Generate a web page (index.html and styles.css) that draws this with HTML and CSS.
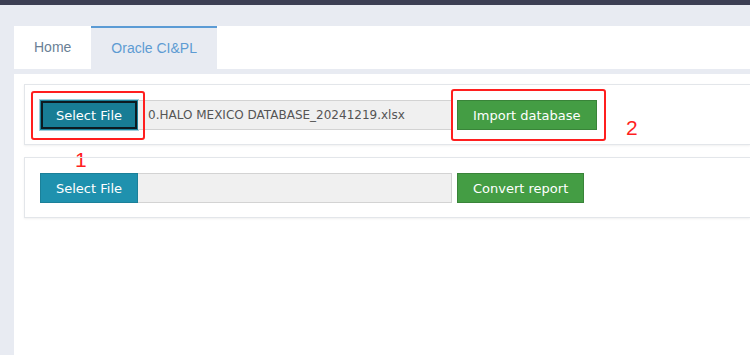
FILE: index.html
```html
<!DOCTYPE html>
<html lang="en">
<head>
<meta charset="UTF-8">
<meta name="viewport" content="width=device-width, initial-scale=1.0">
<title>Oracle CI&amp;PL</title>
<link rel="stylesheet" href="styles.css">
</head>
<body>

<div class="topbar"></div>

<div class="main">
  <div class="tabs">
    <div class="tab">Home</div>
    <div class="tab active">Oracle CI&amp;PL</div>
  </div>

  <div class="content">
    <div class="panel">
      <div class="row">
        <button class="btn-file focused">Select File</button>
        <div class="file-name">0.HALO MEXICO DATABASE_20241219.xlsx</div>
        <button class="btn-go">Import database</button>
      </div>
      <div class="mark box1"></div>
      <div class="mark box2"></div>
      <div class="num num1">1</div>
      <div class="num num2">2</div>
    </div>

    <div class="panel">
      <div class="row">
        <button class="btn-file">Select File</button>
        <div class="file-name"></div>
        <button class="btn-go">Convert report</button>
      </div>
    </div>
  </div>
</div>

</body>
</html>
```

FILE: styles.css
```css
body {
  margin: 0;
  background: #e8ebf2;
  font-family: "DejaVu Sans", Verdana, sans-serif;
  height: 100vh;
  overflow: hidden;
}

.topbar {
  height: 5px;
  background: #3c3f54;
}

.main {
  padding: 21px 0 0 14px;
}

/* tabs */
.tabs {
  display: flex;
  background: #fff;
  height: 43px;
}

.tab {
  font-family: "Liberation Sans", Arial, sans-serif;
  font-size: 14px;
  color: #6a7f95;
  padding: 0 20px;
  line-height: 43px;
}

.tab.active {
  background: #e8ebf2;
  color: #5d9bd3;
  border-top: 2px solid #5b9bd5;
  line-height: 41px;
  padding: 0 20px;
  width: 86px;
}

.content {
  box-sizing: border-box;
  margin-top: 5px;
  background: #fff;
  padding: 10px 0 0 10px;
  height: calc(100vh - 74px);
}

.panel {
  position: relative;
  border: 1px solid #e3e6ea;
  border-right: none;
  box-shadow: 0 1px 2px rgba(0,0,0,0.06);
  padding: 15px 15px 14px;
  margin-bottom: 12px;
}

.row {
  display: flex;
  align-items: center;
}

.btn-file {
  font-family: "DejaVu Sans", Verdana, sans-serif;
  font-size: 13px;
  color: #fff;
  background: #1f91ae;
  border: 1px solid #1b8099;
  width: 98px;
  height: 30px;
  padding: 0;
}

.btn-file.focused {
  background: #187d95;
  outline: 2px solid #0d1a20;
  outline-offset: -3px;
  box-shadow: 0 0 0 1px #9fd0dd;
}

.file-name {
  box-sizing: border-box;
  width: 314px;
  height: 30px;
  background: #f0f0f0;
  border: 1px solid #d3d3d3;
  border-left: none;
  font-size: 12px;
  color: #555;
  line-height: 28px;
  padding-left: 10px;
  white-space: nowrap;
}

.btn-go {
  font-family: "DejaVu Sans", Verdana, sans-serif;
  font-size: 13px;
  color: #fff;
  background: #449d44;
  border: 1px solid #398439;
  height: 30px;
  padding: 0 15px;
  margin-left: 5px;
}

/* annotations */
.mark {
  position: absolute;
  border: 2px solid #ff1f1f;
  border-radius: 3px;
}

.box1 {
  left: 6px;
  top: 6px;
  width: 110px;
  height: 45px;
}

.box2 {
  left: 426px;
  top: 4px;
  width: 151px;
  height: 48px;
}

.num {
  position: absolute;
  font-family: "Liberation Sans", Arial, sans-serif;
  font-size: 21px;
  color: #ff1f1f;
}

.num1 {
  left: 50px;
  top: 63px;
}

.num2 {
  left: 601px;
  top: 31px;
}
```
